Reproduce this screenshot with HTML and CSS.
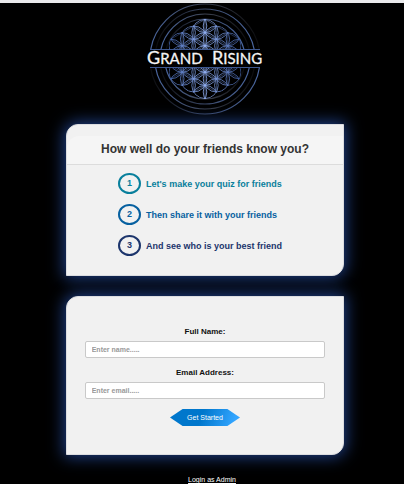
FILE: index.html
```html
<!DOCTYPE html>
<html lang="en">
<head>
<meta charset="utf-8">
<meta name="viewport" content="width=device-width, initial-scale=1">
<title>Grand Rising</title>
<link rel="stylesheet" href="styles.css">
</head>
<body>
<header class="brand">
  <svg class="logo" viewBox="-60 -56 120 112" role="img" aria-label="Grand Rising">
    <defs>
      <linearGradient id="fade-right" x1="0" y1="0" x2="1" y2="0">
        <stop offset="0" stop-color="#4a669f"/>
        <stop offset=".5" stop-color="#3c4250"/>
        <stop offset="1" stop-color="#0b0b0d"/>
      </linearGradient>
      <linearGradient id="fade-left" x1="1" y1="0" x2="0" y2="0">
        <stop offset="0" stop-color="#4a669f"/>
        <stop offset=".5" stop-color="#3c4a68"/>
        <stop offset="1" stop-color="#0b0b0d"/>
      </linearGradient>
      <linearGradient id="petals" gradientUnits="userSpaceOnUse" x1="-36" y1="0" x2="36" y2="0">
        <stop offset="0" stop-color="#4464ab"/>
        <stop offset=".5" stop-color="#8fadf0"/>
        <stop offset="1" stop-color="#3d5a9c"/>
      </linearGradient>
      <clipPath id="upper"><rect x="-60" y="-56" width="120" height="46"/></clipPath>
      <clipPath id="lower"><rect x="-60" y="9" width="120" height="47"/></clipPath>
      <clipPath id="outline">
        <circle r="13.5"/>
        <circle cy="-13.2" r="13.5"/><circle cy="13.2" r="13.5"/>
        <circle cy="-26.4" r="13.5"/><circle cy="26.4" r="13.5"/>
        <circle cx="-11.4" cy="-19.8" r="13.5"/><circle cx="-11.4" cy="-6.6" r="13.5"/>
        <circle cx="-11.4" cy="6.6" r="13.5"/><circle cx="-11.4" cy="19.8" r="13.5"/>
        <circle cx="11.4" cy="-19.8" r="13.5"/><circle cx="11.4" cy="-6.6" r="13.5"/>
        <circle cx="11.4" cy="6.6" r="13.5"/><circle cx="11.4" cy="19.8" r="13.5"/>
        <circle cx="-22.8" cy="-13.2" r="13.5"/><circle cx="-22.8" r="13.5"/><circle cx="-22.8" cy="13.2" r="13.5"/>
        <circle cx="22.8" cy="-13.2" r="13.5"/><circle cx="22.8" r="13.5"/><circle cx="22.8" cy="13.2" r="13.5"/>
      </clipPath>
      <g id="flower" fill="none" stroke="url(#petals)" stroke-width=".8" clip-path="url(#outline)">
        <circle r="13.2"/>
        <circle cy="-13.2" r="13.2"/><circle cy="13.2" r="13.2"/>
        <circle cy="-26.4" r="13.2"/><circle cy="26.4" r="13.2"/>
        <circle cx="-11.4" cy="-19.8" r="13.2"/><circle cx="-11.4" cy="-6.6" r="13.2"/>
        <circle cx="-11.4" cy="6.6" r="13.2"/><circle cx="-11.4" cy="19.8" r="13.2"/>
        <circle cx="11.4" cy="-19.8" r="13.2"/><circle cx="11.4" cy="-6.6" r="13.2"/>
        <circle cx="11.4" cy="6.6" r="13.2"/><circle cx="11.4" cy="19.8" r="13.2"/>
        <circle cx="-22.8" cy="-13.2" r="13.2"/><circle cx="-22.8" r="13.2"/><circle cx="-22.8" cy="13.2" r="13.2"/>
        <circle cx="22.8" cy="-13.2" r="13.2"/><circle cx="22.8" r="13.2"/><circle cx="22.8" cy="13.2" r="13.2"/>
        <circle cy="-39.6" r="13.2"/><circle cy="39.6" r="13.2"/>
        <circle cx="-11.4" cy="-33" r="13.2"/><circle cx="11.4" cy="-33" r="13.2"/>
        <circle cx="-11.4" cy="33" r="13.2"/><circle cx="11.4" cy="33" r="13.2"/>
        <circle cx="-22.8" cy="-26.4" r="13.2"/><circle cx="22.8" cy="-26.4" r="13.2"/>
        <circle cx="-22.8" cy="26.4" r="13.2"/><circle cx="22.8" cy="26.4" r="13.2"/>
        <circle cx="-34.2" cy="-19.8" r="13.2"/><circle cx="34.2" cy="-19.8" r="13.2"/>
        <circle cx="-34.2" cy="19.8" r="13.2"/><circle cx="34.2" cy="19.8" r="13.2"/>
        <circle cx="-34.2" cy="-6.6" r="13.2"/><circle cx="34.2" cy="-6.6" r="13.2"/>
        <circle cx="-34.2" cy="6.6" r="13.2"/><circle cx="34.2" cy="6.6" r="13.2"/>
        <path d="M-.1-39.6L.1 39.6M-11.5-33L-11.3 33M11.3-33L11.5 33M-22.9-26.4L-22.7 26.4M22.7-26.4L22.9 26.4M-34.2-19.8L0-39.6M34.2-19.8L0-39.6M-34.2-6.6L22.8-39.6M34.2-6.6L-22.8-39.6M-34.2 6.6L34.2-33M34.2 6.6L-34.2-33M-34.2 19.8L34.2-19.8M34.2 19.8L-34.2-19.8M-34.2 33L34.2-6.6M34.2 33L-34.2-6.6M-22.8 39.6L34.2 6.6M22.8 39.6L-34.2 6.6" stroke-width=".4"/>
      </g>
    </defs>
    <g clip-path="url(#upper)" fill="none" stroke-width="1.2">
      <circle r="55" stroke="url(#fade-right)"/>
      <circle r="50" stroke="url(#fade-left)"/>
      <circle r="45" stroke="url(#fade-right)"/>
      <circle r="40" stroke="url(#fade-left)"/>
      <use href="#flower"/>
    </g>
    <g clip-path="url(#lower)" fill="none" stroke-width="1.2">
      <circle r="55" stroke="url(#fade-left)"/>
      <circle r="50" stroke="url(#fade-right)"/>
      <circle r="45" stroke="url(#fade-left)"/>
      <circle r="40" stroke="url(#fade-right)"/>
      <use href="#flower"/>
    </g>
    <path d="M-55-9.5H55M-55 8.5H55" stroke="#3d578f"/>
    <text class="logo-text" y="5"><tspan class="cap" x="-58">G</tspan>RAND <tspan class="cap" x="7">R</tspan>ISING</text>
  </svg>
</header>
<main class="content">
  <section class="card intro">
    <h1 class="title">How well do your friends know you?</h1>
    <ol class="steps">
      <li class="step step-teal"><span class="number">1</span>Let's make your quiz for friends</li>
      <li class="step step-blue"><span class="number">2</span>Then share it with your friends</li>
      <li class="step step-navy"><span class="number">3</span>And see who is your best friend</li>
    </ol>
  </section>
  <form class="card signup">
    <label for="name">Full Name:</label>
    <input id="name" type="text" placeholder="Enter name.....">
    <label for="email">Email Address:</label>
    <input id="email" type="email" placeholder="Enter email.....">
    <button type="submit">Get Started</button>
  </form>
</main>
<footer class="footer"><a href="#">Login as Admin</a></footer>
</body>
</html>
```
FILE: styles.css
```css
* {
  box-sizing: border-box;
}

body {
  margin: 0;
  padding-left: 6px;
  border-top: 3px solid #e9eaec;
  background: #000;
  color: #111;
  font-family: "Liberation Sans", Arial, sans-serif;
}

.brand {
  display: flex;
  justify-content: center;
}

.logo {
  width: 120px;
  height: 112px;
}

.logo-text {
  fill: #f4f4f4;
  stroke: #f4f4f4;
  stroke-width: .3;
  font-family: Lato, sans-serif;
  font-size: 15px;
}

.logo-text .cap {
  font-size: 18px;
}

.content {
  display: flex;
  flex-direction: column;
  gap: 20px;
  width: 70%;
  margin: 9px auto 0;
}

.card {
  border: 1px solid #dcdde0;
  border-radius: 12px 0 12px 0;
  background: #f1f1f1;
  box-shadow: 0 0 16px 2px #1f4088;
}

.intro {
  padding: 11px 0 19px;
}

.title {
  margin: 0;
  padding: 3px 0 5px;
  border-bottom: 1px solid #dcdcdc;
  border-radius: 12px 0 0 0;
  background: #f5f5f5;
  color: #333;
  font-size: 12px;
  line-height: 20px;
  text-align: center;
}

.steps {
  display: flex;
  flex-direction: column;
  gap: 10px;
  width: fit-content;
  margin: 8px auto 0;
  padding: 0 10px 0 0;
  list-style: none;
}

.step {
  display: flex;
  align-items: center;
  gap: 5px;
  font-size: 9px;
  font-weight: bold;
}

.number {
  width: 23px;
  border: 2px solid;
  border-radius: 50%;
  line-height: 17px;
  text-align: center;
}

.step-teal {
  color: #087f9c;
}

.step-blue {
  color: #0660a0;
}

.step-navy {
  color: #1c356c;
}

.signup {
  display: flex;
  flex-direction: column;
  padding: 30px 18px 28px;
}

.signup label {
  margin-bottom: 4px;
  font-size: 8px;
  font-weight: bold;
  line-height: 10px;
  text-align: center;
}

.signup input {
  width: 100%;
  height: 17px;
  margin-bottom: 10px;
  padding: 0 6px;
  border: 1px solid #c9c9c9;
  border-radius: 2px;
  background: #fff;
  font: bold 7px "Liberation Sans", Arial, sans-serif;
}

.signup input::placeholder {
  color: #999;
}

.signup button {
  align-self: center;
  width: 70px;
  height: 17px;
  padding: 0;
  border: 0;
  background: linear-gradient(110deg, #0077cc 45%, #33a5ff 90%);
  clip-path: polygon(0 50%, 18% 0, 82% 0, 100% 50%, 82% 100%, 18% 100%);
  color: #fff;
  font: 7px "Liberation Sans", Arial, sans-serif;
}

.footer {
  padding: 20px 0 0 14px;
  font-size: 7px;
  line-height: 9px;
  text-align: center;
}

.footer a {
  color: #fff;
}
```
